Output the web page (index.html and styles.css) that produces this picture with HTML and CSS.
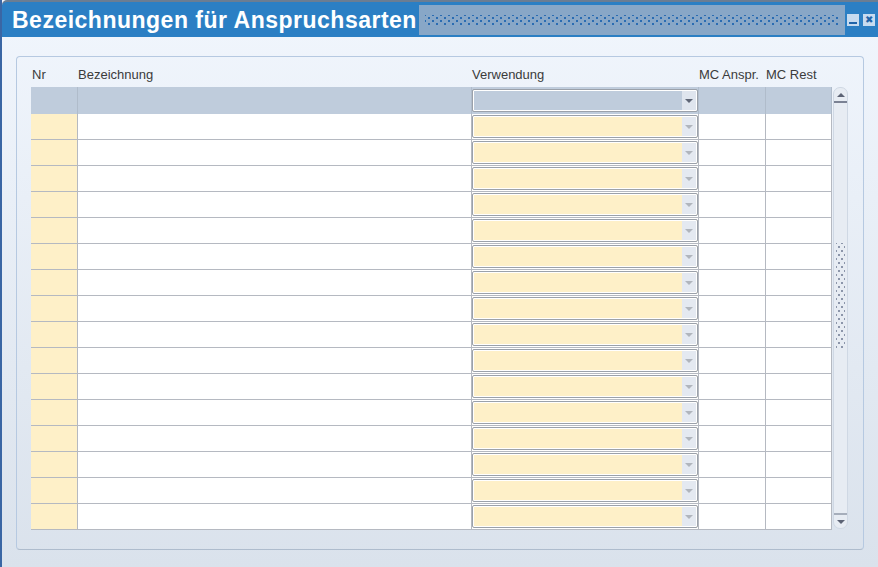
FILE: index.html
```html
<!DOCTYPE html>
<html lang="de">
  <head>
    <meta charset="UTF-8" />
    <title>Bezeichnungen für Anspruchsarten</title>
    <link rel="stylesheet" href="styles.css">
  </head>
  <body>
    <div class="window">
      <div class="titlebar">
        <h1 class="title">Bezeichnungen für Anspruchsarten</h1>
        <div class="grip"><div class="grip-dots"></div></div>
        <div class="win-buttons">
          <span class="win-btn btn-min"><span class="min-bar"></span></span>
          <span class="win-btn btn-close">&#x2716;</span>
        </div>
      </div>

      <div class="client">
        <div class="panel">
          <div class="labels">
            <span class="lbl-nr">Nr</span>
            <span>Bezeichnung</span>
            <span>Verwendung</span>
            <span>MC Anspr.</span>
            <span>MC Rest</span>
          </div>

          <div class="table-area">
            <div class="grid">
              <div class="row head">
                <div class="cell"></div><div class="cell"></div>
                <div class="cell use"><div class="combo"><span class="combo-btn"></span></div></div>
                <div class="cell"></div><div class="cell"></div>
              </div>
              <!-- 16 empty records -->
              <div class="row"><div class="cell nr"></div><div class="cell"></div><div class="cell use"><div class="combo"><span class="combo-btn"></span></div></div><div class="cell"></div><div class="cell"></div></div>
              <div class="row"><div class="cell nr"></div><div class="cell"></div><div class="cell use"><div class="combo"><span class="combo-btn"></span></div></div><div class="cell"></div><div class="cell"></div></div>
              <div class="row"><div class="cell nr"></div><div class="cell"></div><div class="cell use"><div class="combo"><span class="combo-btn"></span></div></div><div class="cell"></div><div class="cell"></div></div>
              <div class="row"><div class="cell nr"></div><div class="cell"></div><div class="cell use"><div class="combo"><span class="combo-btn"></span></div></div><div class="cell"></div><div class="cell"></div></div>
              <div class="row"><div class="cell nr"></div><div class="cell"></div><div class="cell use"><div class="combo"><span class="combo-btn"></span></div></div><div class="cell"></div><div class="cell"></div></div>
              <div class="row"><div class="cell nr"></div><div class="cell"></div><div class="cell use"><div class="combo"><span class="combo-btn"></span></div></div><div class="cell"></div><div class="cell"></div></div>
              <div class="row"><div class="cell nr"></div><div class="cell"></div><div class="cell use"><div class="combo"><span class="combo-btn"></span></div></div><div class="cell"></div><div class="cell"></div></div>
              <div class="row"><div class="cell nr"></div><div class="cell"></div><div class="cell use"><div class="combo"><span class="combo-btn"></span></div></div><div class="cell"></div><div class="cell"></div></div>
              <div class="row"><div class="cell nr"></div><div class="cell"></div><div class="cell use"><div class="combo"><span class="combo-btn"></span></div></div><div class="cell"></div><div class="cell"></div></div>
              <div class="row"><div class="cell nr"></div><div class="cell"></div><div class="cell use"><div class="combo"><span class="combo-btn"></span></div></div><div class="cell"></div><div class="cell"></div></div>
              <div class="row"><div class="cell nr"></div><div class="cell"></div><div class="cell use"><div class="combo"><span class="combo-btn"></span></div></div><div class="cell"></div><div class="cell"></div></div>
              <div class="row"><div class="cell nr"></div><div class="cell"></div><div class="cell use"><div class="combo"><span class="combo-btn"></span></div></div><div class="cell"></div><div class="cell"></div></div>
              <div class="row"><div class="cell nr"></div><div class="cell"></div><div class="cell use"><div class="combo"><span class="combo-btn"></span></div></div><div class="cell"></div><div class="cell"></div></div>
              <div class="row"><div class="cell nr"></div><div class="cell"></div><div class="cell use"><div class="combo"><span class="combo-btn"></span></div></div><div class="cell"></div><div class="cell"></div></div>
              <div class="row"><div class="cell nr"></div><div class="cell"></div><div class="cell use"><div class="combo"><span class="combo-btn"></span></div></div><div class="cell"></div><div class="cell"></div></div>
              <div class="row"><div class="cell nr"></div><div class="cell"></div><div class="cell use"><div class="combo"><span class="combo-btn"></span></div></div><div class="cell"></div><div class="cell"></div></div>
            </div>

            <div class="scrollbar">
              <div class="sb-btn sb-up"><span class="arrow-up"></span></div>
              <div class="sb-track"><div class="sb-grip"></div></div>
              <div class="sb-btn sb-down"><span class="arrow-down"></span></div>
            </div>
          </div>
        </div>
      </div>
    </div>
  </body>
</html>
```

FILE: styles.css
```css
body {
  margin: 0;
  font-family: "Liberation Sans", Arial, sans-serif;
  background-color: #dce4ee;
}
.window {
  width: 878px;
  height: 567px;
  box-sizing: border-box;
  display: flex;
  flex-direction: column;
  border-left: 2px solid #3a66a4;
  background: linear-gradient(#f1f6fd, #dae2ec);
  overflow: hidden;
}

/* title bar */
.titlebar {
  height: 37px;
  box-sizing: border-box;
  display: flex;
  align-items: flex-start;
  padding: 3px 3px 0 10px;
  background-color: #2b7fc4;
  border-top: 2px solid #6a7d93;
  border-top-left-radius: 5px;
}
.title {
  margin: 0;
  font-size: 23px;
  line-height: 31px;
  letter-spacing: 0.5px;
  font-weight: bold;
  color: #fff;
  white-space: nowrap;
}
.grip {
  flex: 1;
  height: 30px;
  margin-left: 2px;
  display: flex;
  align-items: center;
  padding: 0 6px;
  background-color: #88a7c7;
}
.grip-dots {
  flex: 1;
  height: 10px;
  background-image: radial-gradient(circle, #2a6cb2 1px, transparent 1.5px),
    radial-gradient(circle, #2a6cb2 1px, transparent 1.5px);
  background-size: 8px 6px;
  background-position: 0 0, 4px 3px;
}
.win-buttons {
  display: flex;
  gap: 4px;
  margin-left: 2px;
  margin-top: 9px;
}
.win-btn {
  width: 12px;
  height: 12px;
  background-color: #c6dbf0;
  color: #1f64aa;
  font-size: 10px;
  line-height: 12px;
  text-align: center;
  display: flex;
  justify-content: center;
}
.min-bar {
  width: 8px;
  height: 2px;
  margin-top: 8px;
  background-color: #1f64aa;
}

/* client area */
.client {
  flex: 1;
  padding: 19px 0 0 14px;
}
.panel {
  width: 848px;
  height: 494px;
  box-sizing: border-box;
  border: 1px solid #b6c9e1;
  border-bottom-color: #aebccd;
  border-radius: 4px;
  padding-left: 14px;
}
.labels,
.row {
  display: grid;
  grid-template-columns: 47px 394px 227px 67px 66px;
}
.labels {
  height: 30px;
  box-sizing: border-box;
  padding-top: 10px;
  font-size: 13px;
  color: #3b3b3b;
}
.lbl-nr {
  padding-left: 1px;
}
.table-area {
  display: flex;
  align-items: flex-start;
}
.grid {
  width: 801px;
}
.row {
  height: 26px;
  box-sizing: border-box;
  border-bottom: 1px solid #b5b9c1;
}
.row.head {
  height: 27px;
  border-bottom: none;
  background-color: #bfccdc;
}
.cell {
  border-right: 1px solid #b5b9c1;
  background-color: #fff;
}
.row.head .cell {
  background-color: transparent;
  border-right-color: #b0bccb;
}
.cell.nr {
  background-color: #fef0c8;
}
.cell.use {
  padding-top: 1px;
}
.row.head .cell.use {
  padding-top: 2px;
}

/* combo boxes */
.combo {
  height: 23px;
  box-sizing: border-box;
  border: 1px solid #9ba1aa;
  border-radius: 2px;
  box-shadow: inset 0 0 0 1px #fff;
  background-color: #fef0c8;
  display: flex;
  justify-content: flex-end;
  padding: 1px;
}
.row.head .combo {
  height: 23px;
  background-color: #bfccdc;
}
.combo-btn {
  width: 14px;
  background-color: #e4e9f1;
  position: relative;
}
.combo-btn::after {
  content: "";
  position: absolute;
  left: 3px;
  top: 8px;
  border-left: 4px solid transparent;
  border-right: 4px solid transparent;
  border-top: 4px solid #b0b5bd;
}
.row.head .combo-btn {
  background-color: #dfe5ee;
}
.row.head .combo-btn::after {
  border-top-color: #5f6676;
}

/* scrollbar */
.scrollbar {
  width: 15px;
  height: 442px;
  margin-left: 1px;
  box-sizing: border-box;
  border: 1px solid #cfd8e4;
  border-radius: 7px;
  background-color: #e7ecf3;
  display: flex;
  flex-direction: column;
}
.sb-btn {
  height: 13px;
  display: flex;
  justify-content: center;
  align-items: center;
}
.sb-up {
  border-bottom: 2px solid #7b8294;
}
.sb-down {
  border-top: 2px solid #a6aebb;
}
.arrow-up {
  border-left: 4px solid transparent;
  border-right: 4px solid transparent;
  border-bottom: 4px solid #5c6375;
}
.arrow-down {
  border-left: 4px solid transparent;
  border-right: 4px solid transparent;
  border-top: 4px solid #5c6375;
}
.sb-track {
  flex: 1;
  display: flex;
  flex-direction: column;
  align-items: center;
  padding-top: 140px;
}
.sb-grip {
  width: 9px;
  height: 106px;
  background-image: radial-gradient(circle, #8a93a8 0.7px, transparent 1px),
    radial-gradient(circle, #8a93a8 0.7px, transparent 1px);
  background-size: 6px 8px;
  background-position: 0 0, 3px 4px;
}
```
